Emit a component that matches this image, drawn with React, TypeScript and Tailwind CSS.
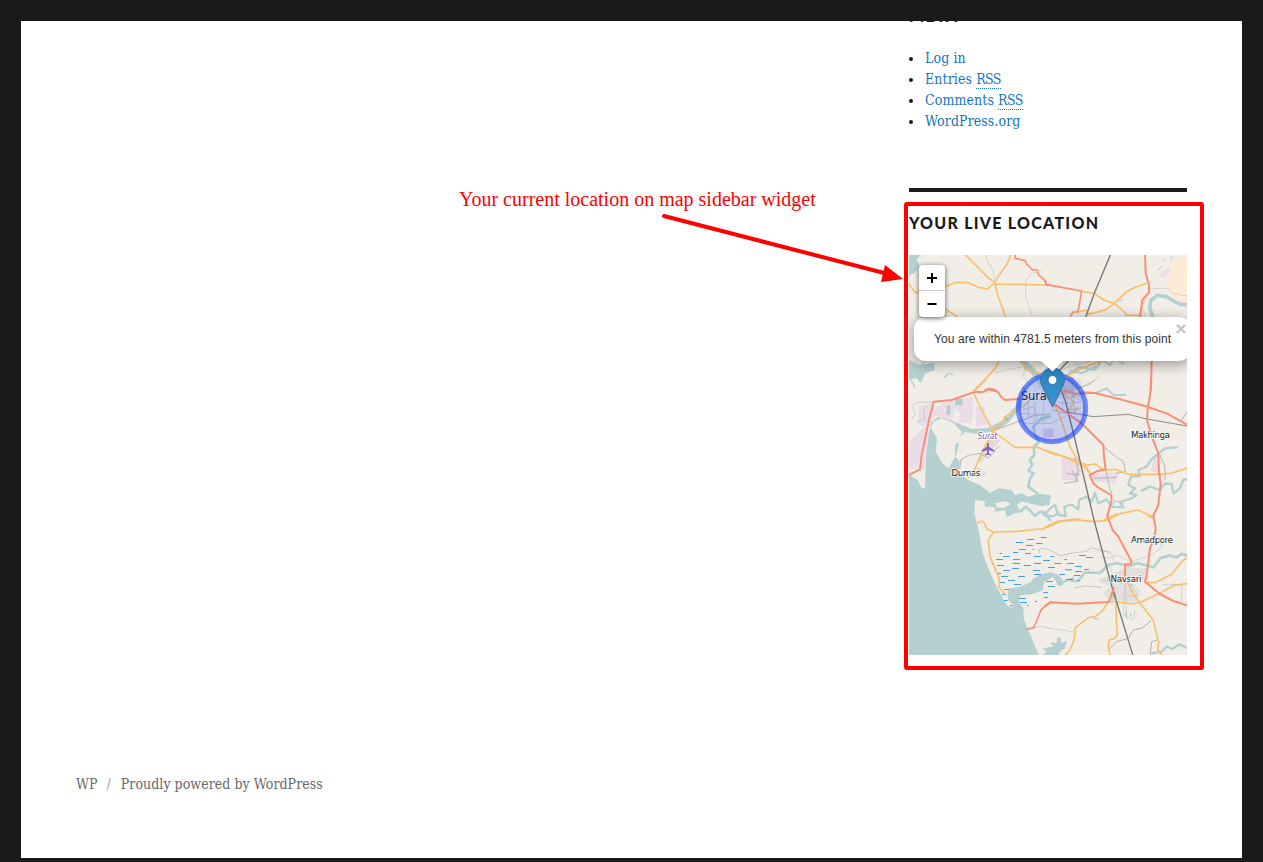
import React from "react";

const ORANGE = "#f9c06e";
const RED = "#fa8f76";
const WATER = "#b5d0d0";
const LAND = "#f1eee8";
const GREY = "#c6c6c4";
const RAIL = "#777777";

type LineProps = { d: string; c?: string; w?: number };

function Line({ d, c = ORANGE, w = 5 }: LineProps) {
  return <path d={d} fill="none" stroke={c} strokeWidth={w} strokeLinejoin="round" strokeLinecap="round" />;
}

function Area({ d, c = WATER }: LineProps) {
  return <path d={d} fill={c} />;
}

function Tile({ x, y, children }: { x: number; y: number; children: React.ReactNode }) {
  return <g transform={`translate(${x} ${y}) scale(0.33333)`}>{children}</g>;
}

const marsh: [number, number, number][] = [
  [127, 28, 20], [167, 22, 17], [93, 37, 21], [153, 40, 19], [123, 46, 21], [102, 58, 21], [143, 58, 4], [84, 67, 16], [44, 70, 7],
  [120, 70, 17], [54, 79, 21], [147, 79, 21], [196, 79, 12], [33, 88, 21], [84, 88, 21], [174, 91, 21], [84, 100, 21], [147, 100, 21],
  [208, 100, 21], [238, 88, 8], [246, 100, 21], [282, 76, 20], [303, 82, 21], [36, 106, 21], [117, 106, 21], [270, 109, 21], [81, 115, 21],
  [240, 119, 21], [297, 118, 15], [54, 121, 21], [144, 121, 21], [189, 112, 21], [270, 124, 21], [39, 130, 9], [99, 139, 21],
  [48, 139, 21], [147, 133, 21], [222, 133, 18], [267, 136, 19], [69, 151, 21], [183, 154, 21], [243, 148, 21], [276, 151, 7],
  [45, 157, 15], [87, 163, 21], [189, 169, 21], [57, 178, 16], [174, 187, 15], [51, 193, 8], [102, 205, 21], [177, 202, 12],
  [57, 211, 11], [105, 217, 21], [150, 214, 6], [126, 226, 5], [75, 226, 8],
];

function MapLabel({ x, y, len, size = 9, children }: { x: number; y: number; len: number; size?: number; children: string }) {
  return (
    <text x={x} y={y} fontSize={size} textLength={len} fill="#222" stroke="#f8f6f2" strokeWidth={2.2} strokeOpacity={0.85} paintOrder="stroke" style={{ fontFamily: "'DejaVu Sans', sans-serif" }}>
      {children}
    </text>
  );
}

function MapDrawing() {
  return (
    <svg width="278" height="400" viewBox="909 255 278 400" className="block">
      <rect x="909" y="255" width="278" height="400" fill={LAND} />

      {/* Built-up and industrial areas */}
      <Tile x={905} y={380}>
        <Area c="#ebdde8" d="M12 185L58 140L75 150L62 272L40 262L12 272Z" />
        <Area c="#ebdde8" d="M42 75L112 78L110 108L82 108L75 142L38 135ZM110 70L205 50L202 130H160L165 100L150 88L138 132L110 112ZM212 80L238 78L245 135L212 142Z" />
        <Area c="#e5ddd5" d="M250 170L288 180L225 250L215 244Z" />
        <Area c="#a9cfcb" d="M152 56H172V76H150ZM126 78H136V104H125Z" />
        <Area c="#e3e0dd" d="M370 10L450 -30L530 0L530 50L480 60L400 30Z" />
      </Tile>
      <Tile x={1045} y={380}>
        <Area c="#eadbe5" d="M50 235L105 230L110 275L90 300L50 300ZM135 282L222 275L210 310L145 302ZM325 235L340 220L348 285L318 272Z" />
        <Area c="#dccde0" d="M-5 146L26 146L26 172L-5 172Z" />
        <Area c="#c8c8cc" d="M35 0L82 -10L105 25L80 35L35 25Z" />
      </Tile>
      <Tile x={1045} y={250}>
        <Area c="#fcebd5" d="M378 35L395 25H426V165L390 150L368 110Z" />
        <Area c="#eadde8" d="M350 65L378 52L365 80L340 82ZM60 325L150 315L90 345Z" />
      </Tile>
      <Tile x={1045} y={515}>
        <Area c="#e3dfdb" d="M155 195L200 180L245 155L300 162L300 192L258 200L280 240L270 262L190 255L175 235L195 215Z" />
        <Area c="#a5dc9a" d="M200 236L212 233L215 249L203 252Z" />
      </Tile>

      {/* Sea, estuaries and rivers */}
      <Tile x={905} y={380}>
        <Area d="M12 285L38 300L48 322L60 326L64 225L72 160L80 125L100 110L140 122L200 147L250 143L290 122L330 80L355 20L368 30L345 85L310 128L270 153L215 162L180 156L165 170L160 200L152 230L165 245L162 280L190 300L225 315L255 338L280 325L320 330L330 345L350 340L370 350L395 343L415 352L435 350V374L410 378L380 372L350 364L335 375L344 390L305 412L300 390L270 395L268 380L240 380L238 364L210 360L208 400L222 455L232 515L250 565L275 620L305 675L320 683L326 677L310 660L308 635L315 625L345 620L380 605L410 585L435 577L450 580L438 595L415 605L415 630L380 643L345 645L342 665L355 685L357 720L370 750L402 826H12Z" />
        <Area c={LAND} d="M85 125L110 115L145 128L170 155L162 185L150 195L150 230L130 266L112 250L92 215L96 175L78 145Z" />
        <Area c={LAND} d="M270 370L302 363L318 372L295 384L275 382Z" />
        <Line c={WATER} w={8} d="M435 350L402 345L370 320L374 298L386 280L370 272L382 255L374 240L388 225L386 200L402 185L390 165L385 140L410 115L435 110" />
        <Line c={WATER} w={8} d="M320 398L350 392L362 380L378 394L390 408L405 395L420 398L435 420" />
      </Tile>
      <Tile x={905} y={250}>
        <Area d="M12 15H48L35 28L44 50L25 72L12 75ZM12 330L45 345L85 340L90 360L60 370L48 400L35 385L12 388Z" />
        <Line c={WATER} w={4} d="M48 346L62 333M12 380L30 412M118 382L130 370L142 374" />
        <Line c={WATER} w={18} d="M350 330L385 365L410 400" />
      </Tile>
      <Tile x={1045} y={250}>
        <Line c={WATER} w={11} d="M324 202L314 174L318 150L338 136L365 140L386 154L408 163L430 164" />
        <Line c={WATER} w={6} d="M70 370L105 350L150 360L170 330L195 345L208 325L235 340M75 362L110 370L150 350" />
        <Line c={WATER} w={3} d="M222 154L235 148M340 60L350 48M355 32L360 29M378 28L380 20" />
      </Tile>
      <Tile x={1045} y={380}>
        <Line c={WATER} w={6} d="M80 50L115 35L150 40L185 25L205 45L242 45" />
        <Line c={WATER} w={7} d="M0 405L12 388L30 375L38 404L62 408L58 380L80 374L100 388L102 360L125 350L140 366L150 338L160 370L185 358L200 380L235 382L225 366L260 355L275 345L255 340L270 325L250 315L258 290L285 288L280 270L305 260L318 240L335 225L360 205L395 202" />
        <Line c={WATER} w={7} d="M290 332L315 320L345 330L360 310L380 312L385 340L405 325L415 300L426 297" />
        <Line c={WATER} w={4} d="M195 384L210 362L235 370" />
      </Tile>
      <Tile x={985} y={530}>
        <Area d="M75 190L100 175L135 165L145 145L170 133L195 127L215 133L230 145L236 165L220 168L210 150L200 136L180 145L172 170L150 185L110 195Z" />
      </Tile>
      <Tile x={1045} y={515}>
        <Line c={WATER} w={7} d="M45 203L85 190" />
        <Line c={WATER} w={8} d="M80 198L100 198L120 172L165 174L190 150L215 144L250 154L280 145L325 157L348 128L375 122L395 127L410 116L430 124" />
        <Line c={WATER} w={7} d="M320 415L350 410L365 395L382 402L402 388L426 398M-5 0L25 4L40 -8" />
        <Area d="M5 410L-8 400L25 395L15 382L35 384L38 365L48 370L48 383L65 378L60 400L48 408L40 420H-8Z" />
        <Line c={WATER} w={4} d="M148 311H160M242 294V304M257 296V304" />
      </Tile>

      {/* Minor roads */}
      <Tile x={905} y={250}>
        <Line c={GREY} w={2} d="M240 15L252 42L264 62L271 94M410 65L380 70L362 90V140L382 198M270 368L320 356L360 350M360 350L355 380L370 400" />
      </Tile>
      <Tile x={1045} y={250}>
        <Line c={GREY} w={2} d="M15 375L60 355L110 340L150 332M100 415L150 390L165 378M308 115H370L380 130L426 138M300 200L292 170L300 148" />
      </Tile>
      <Tile x={905} y={380}>
        <Line c={GREY} w={2.5} d="M86 65L35 68L20 80L32 102L20 120M86 65L55 85L60 118L35 125M190 275L220 265L240 280L220 292" />
        <Line c="#aaa" w={2.5} d="M165 265L167 240L190 226L225 220L250 235L280 200M260 155L310 135L355 120L390 106L435 102" />
        <Line c={GREY} w={2.5} d="M362 60L400 40L435 65L490 40L525 60M350 90L385 80L400 120M370 30L370 110M390 30L390 130M415 30V130M480 0L470 100M345 100L435 105M355 130L440 130L535 80" />
      </Tile>
      <Tile x={1045} y={380}>
        <Line c="#aaa" w={2.5} d="M100 25L130 14L150 0M410 120L426 95M178 202L210 228L235 245L242 275L215 280M58 310L100 303L80 270M90 235L100 270L92 305M65 280L105 285M182 265L190 310L200 340M145 295L215 292M345 225L360 260L360 298" />
        <Line c="#aaa" w={2} d="M10 20L40 45L80 30L110 55M20 60L55 70L110 65M20 90L60 100L80 80M80 0L90 100M60 20L75 115" />
      </Tile>
      <Tile x={985} y={530}>
        <Line c={GREY} w={3} d="M163 68L163 58L172 54L195 60L225 78L265 68L300 65L322 53L345 62L375 66M267 174L300 168L350 172" />
      </Tile>
      <Tile x={905} y={515}>
        <Line c={GREY} w={2} d="M380 340L410 334L435 340" />
      </Tile>
      <Tile x={1045} y={515}>
        <Line c={GREY} w={2} d="M165 125L190 130L215 120L245 135L290 150M260 140L320 120L352 95L340 75M160 98L205 120L205 135M190 145L205 180M240 205L235 300L265 315L270 285M240 150L245 310M260 210L280 240L240 245M0 338L50 345L90 352M352 208H410V260M300 160L310 198M170 195L270 210L290 240" />
        <Line c="#b0b0b0" w={3} d="M190 405L215 380L250 370L265 345L290 340L318 318M315 418L320 380L335 376" />
      </Tile>

      {/* Secondary roads */}
      <Tile x={905} y={250}>
        <Line d="M12 102L30 127L75 132L120 110L155 97L190 98L220 112L247 117L270 97L252 85L182 15M270 97L282 76L305 45L317 15M270 102L435 105M270 97L276 130L302 200M120 176L160 203M284 332L270 355L240 388L208 420M345 325L365 360L430 375M420 330L435 365" />
      </Tile>
      <Tile x={1045} y={250}>
        <Line d="M110 124L148 130L177 150L208 160L240 187L243 196L290 196M305 100L270 112L245 125L208 160L185 178L150 188L125 193M98 186L125 180L130 190M60 380L110 355L172 332" />
      </Tile>
      <Tile x={905} y={380}>
        <Line d="M205 37L242 0M205 37L230 90L265 155L235 210L208 270M265 155L330 202H398L435 218L510 240M265 155L290 130L300 110L330 95L360 75L390 45M200 285L190 292" />
      </Tile>
      <Tile x={1045} y={380}>
        <Line d="M-10 40L38 90L52 130L75 200L100 245L125 255L150 252L175 268M0 210L70 235L118 260L130 275M120 255L135 280M160 272L210 268L250 283L330 283L380 280L426 264M65 420L105 417M180 418L215 403L278 390L318 407M50 35L85 65L75 90L100 85" />
      </Tile>
      <Tile x={905} y={515}>
        <Line d="M218 23L232 18L238 24L247 43L266 51L340 49L400 42L412 43L435 33L465 20L510 15M266 51L250 75L255 125L270 160L283 190L281 215L304 242" />
      </Tile>
      <Tile x={1045} y={515}>
        <Line d="M0 37L35 20L80 13L145 20L180 17L215 2M310 3L325 10M300 203L330 203L380 178L410 140L426 128M190 258L175 285L150 305L130 308L92 337L87 375L75 405L62 419M190 258L265 267L290 260L345 234L385 212L426 206M250 205L265 238L285 265L325 315L335 360L341 380L338 403L350 419M213 262L214 320L217 360L210 370L192 375L190 395L195 419" />
      </Tile>

      {/* Railways */}
      <Tile x={1045} y={250}>
        <Line c={RAIL} w={4} d="M196 15L148 130L122 201M70 333L30 375L0 410" />
      </Tile>
      <Tile x={1045} y={380}>
        <Line c={RAIL} w={4} d="M45 20L60 60L83 150L115 285L147 420L195 600L263 824" />
        <Line c={RAIL} w={2.5} d="M60 95L145 110L250 103L300 116L380 130L426 138" />
      </Tile>

      {/* Trunk roads */}
      <Tile x={905} y={250}>
        <Line c={RED} d="M330 15V25L360 31L365 42L383 60H397L400 74L423 94V104L435 105M240 420L255 415L272 420" />
      </Tile>
      <Tile x={1045} y={250}>
        <Line c={RED} d="M0 94L4 104L50 112L110 123L102 170L98 186H84L76 200" />
        <Line c={RED} w={6} d="M300 15L302 70L312 105V128L292 150L285 200M320 333L318 420" />
      </Tile>
      <Tile x={905} y={380}>
        <Line c={RED} w={6} d="M12 285L45 268L50 225L72 120L86 65L140 60L205 37L237 35L250 28L278 35L290 52L300 60L340 57L370 50" />
      </Tile>
      <Tile x={1045} y={380}>
        <Line c={RED} w={6} d="M20 30L70 35L90 42L145 38L225 58L300 78L365 100L426 134M318 0L316 40L308 85L306 120L322 175L340 220L342 275L347 310L340 375L325 407M25 70L70 102L110 130L145 165L175 195L177 230L182 268L155 274L134 285L145 310L160 323L198 345L200 360L188 405" />
      </Tile>
      <Tile x={1045} y={515}>
        <Line c={RED} w={6} d="M186 0L203 45L220 65L260 140L257 148H240V195M325 0L332 40L328 70L315 100L305 180L300 200L345 237L385 258L426 271M0 273L15 262L95 266L192 261L206 220" />
      </Tile>
      <Tile x={905} y={515}>
        <Line c={RED} d="M366 343L386 338L395 318L408 285L435 262" />
      </Tile>

      {/* Tidal marsh hatching */}
      <Tile x={985} y={530}>
        {marsh.map(([x, y, w], i) => (
          <path key={i} d={`M${x} ${y + 0.5}h${w}`} stroke="#459ff2" strokeWidth="3.2" />
        ))}
      </Tile>

      {/* Airport */}
      <path transform="translate(988 449)" fill="#8461c4" d="M0 -6.2C1.1 -6.2 1 -4 1 -2.3L6.2 1.2V2.7L1 1.1L.8 4L2.8 5.5V6.4L0 5.7L-2.8 6.4V5.5L-.8 4L-1 1.1L-6.2 2.7V1.2L-1 -2.3C-1 -4 -1.1 -6.2 0 -6.2Z" />
      <text x="977.5" y="439" fontSize="8" fontStyle="italic" textLength="20" fill="#8055b5" stroke="#fff" strokeWidth="2" strokeOpacity="0.8" paintOrder="stroke" style={{ fontFamily: "'DejaVu Sans', sans-serif" }}>Surat</text>
      <circle cx="1006.5" cy="419.5" r="1" fill="#34d17e" />

      <MapLabel x={951.5} y={475.5} len={29}>Dumas</MapLabel>
      <MapLabel x={1131} y={438} len={39}>Makhinga</MapLabel>
      <MapLabel x={1131} y={542.5} len={42}>Amadpore</MapLabel>
      <MapLabel x={1110.5} y={581.5} len={31}>Navsari</MapLabel>
      <MapLabel x={1021} y={399.5} len={30} size={11.5}>Surat</MapLabel>

      {/* Accuracy radius */}
      <circle cx="1052" cy="408" r="33.7" fill="#0033ff" fillOpacity="0.18" stroke="#0033ff" strokeOpacity="0.53" strokeWidth="5" />
    </svg>
  );
}

function Marker() {
  return (
    <svg width="25" height="41" viewBox="0 0 25 41" className="absolute left-[131px] top-[112px]">
      <defs>
        <linearGradient id="pin" x1="0" y1="0" x2="0" y2="1">
          <stop offset="0" stopColor="#2f7fc0" />
          <stop offset="1" stopColor="#3a96d2" />
        </linearGradient>
      </defs>
      <path d="M12.5 .8C6 .8 .5 6 .5 12.7C.5 16.3 2.3 19.5 4.2 23.3L12.5 40L20.8 23.3C22.7 19.5 24.5 16.3 24.5 12.7C24.5 6 19 .8 12.5 .8Z" fill="url(#pin)" stroke="#2f74ab" />
      <circle cx="12.5" cy="13" r="4.5" fill="#fff" stroke="#2a70aa" />
    </svg>
  );
}

function LiveMap() {
  return (
    <div className="relative h-[400px] w-[278px] overflow-hidden font-['Liberation_Sans',sans-serif]">
      <MapDrawing />
      <Marker />
      <div className="absolute left-[5px] top-[62px] flex h-[44px] w-[277px] items-center rounded-[12px] bg-white pl-5 shadow-[0_3px_14px_rgba(0,0,0,0.4)]">
        <span className="whitespace-nowrap text-[12px] leading-[18px] tracking-[0.08px] text-[#333]">You are within 4781.5 meters from this point</span>
        <svg width="10" height="10" viewBox="0 0 10 10" className="absolute left-[262px] top-[7px]"><path d="M1 .8L9 9M9 .8L1 9" stroke="#c3c3c3" strokeWidth="2.4" /></svg>
      </div>
      <div className="absolute left-[10px] top-[10px] flex w-[26px] flex-col rounded-[4px] bg-white shadow-[0_1px_5px_rgba(0,0,0,0.65)]">
        <button aria-label="Zoom in" className="flex h-[26px] items-center justify-center border-b border-[#ccc]">
          <svg width="10" height="10" viewBox="0 0 10 10"><path d="M5 0V10M0 5H10" stroke="#000" strokeWidth="2" /></svg>
        </button>
        <button aria-label="Zoom out" className="flex h-[26px] items-center justify-center">
          <svg width="10" height="10" viewBox="0 0 10 10"><path d="M.5 5H9.5" stroke="#000" strokeWidth="2" /></svg>
        </button>
      </div>
      <svg width="24" height="12" viewBox="0 0 24 12" className="absolute left-[131px] top-[105px]"><path d="M0 0H24L12.5 11.5Z" fill="#fff" /></svg>
    </div>
  );
}

const links = [
  { label: "Log in", rss: false },
  { label: "Entries", rss: true },
  { label: "Comments", rss: true },
  { label: "WordPress.org", rss: false },
];

export default function App() {
  return (
    <div className="h-[862px] w-[1263px] overflow-hidden bg-[#1a1a1a] px-[21px] pb-1 pt-[21px]">
      <div className="relative flex h-[837px] flex-col overflow-hidden bg-white text-[#1a1a1a]">
        <aside className="ml-[888px] w-[278px] shrink-0">
          <section className="flex h-[167px] flex-col">
            <h2 className="-mt-[15px] h-5 shrink-0 font-['Lato',sans-serif] text-[16px] font-black leading-5 tracking-[1.25px]">META</h2>
            <ul className="mt-[22px] text-[14px] leading-[21px]">
              {links.map(({ label, rss }) => (
                <li key={label} className="flex h-[21px] items-center">
                  <span className="mr-3 h-1 w-1 rounded-full bg-[#1a1a1a]" />
                  <a className="font-['DejaVu_Serif_Condensed','DejaVu_Serif',serif] tracking-[0.1px] text-[#1276c0]">
                    {label}
                    {rss && <> <abbr className="inline-block h-[19px] border-b border-dotted border-[#1276c0] leading-[18px] tracking-[-0.6px] no-underline">RSS</abbr></>}
                  </a>
                </li>
              ))}
            </ul>
          </section>
          <section className="border-t-4 border-[#1a1a1a] pt-5">
            <h2 className="h-[43px] whitespace-nowrap font-['Lato',sans-serif] text-[16px] font-black leading-[21px] tracking-[1.25px]">YOUR LIVE LOCATION</h2>
            <LiveMap />
          </section>
        </aside>
        <footer className="ml-[55px] mt-[119px] flex whitespace-nowrap font-['DejaVu_Serif_Condensed','DejaVu_Serif',serif] text-[14px] leading-[21px] tracking-[0.05px] text-[#686868]">
          <span>WP</span>
          <span className="ml-[9px] mr-[10px] text-[#a0a0a0]">/</span>
          <span>Proudly powered by WordPress</span>
        </footer>

        <div className="absolute left-[883px] top-[181px] h-[468px] w-[300px] rounded-[3px] border-4 border-[#ff0000]" />
        <p className="absolute left-[438px] top-[166px] whitespace-nowrap font-['Liberation_Serif',serif] text-[20px] leading-6 text-[#ff0000]">Your current location on map sidebar widget</p>
        <svg width="250" height="75" viewBox="658 210 250 75" className="absolute left-[637px] top-[189px]">
          <path d="M664 216L888 274" stroke="#ff0000" strokeWidth="4" strokeLinecap="round" />
          <path d="M885 265L903 279L881 282Z" fill="#ff0000" />
        </svg>
      </div>
    </div>
  );
}
